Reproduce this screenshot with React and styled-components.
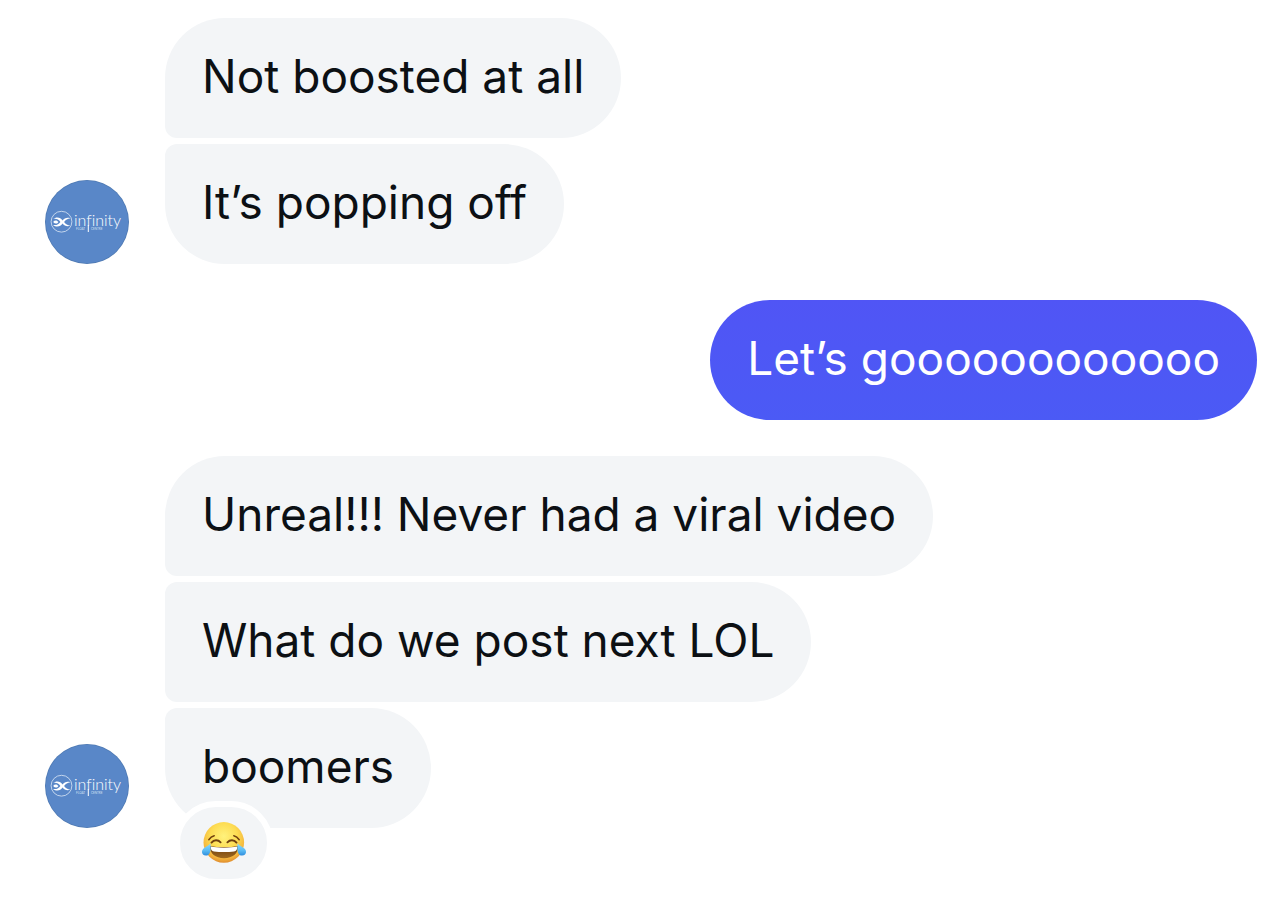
import React from "react";
import styled, { createGlobalStyle } from "styled-components";

const GlobalStyle = createGlobalStyle`
  *, *::before, *::after { box-sizing: border-box; }
  body {
    margin: 0;
    background: #ffffff;
    color: #0c1014;
    font-family: Inter, "Liberation Sans", sans-serif;
  }
`;

const Thread = styled.main`
  display: flex;
  flex-direction: column;
  gap: 36px;
  padding: 18px 19px 80px 45px;
`;

const Group = styled.section`
  display: flex;
  align-items: flex-end;
  justify-content: ${({ $own }) => ($own ? "flex-end" : "flex-start")};
  gap: 36px;
`;

const Stack = styled.div`
  display: flex;
  flex-direction: column;
  align-items: flex-start;
  gap: 6px;
  min-width: 0;
`;

const Bubble = styled.div`
  position: relative;
  padding: 28px 37px 32px;
  font-size: 46px;
  line-height: 60px;
  color: ${({ $own }) => ($own ? "#ffffff" : "#0c1014")};
  background: ${({ $own }) =>
    $own ? "linear-gradient(#5055f5, #4b5af5)" : "#f3f5f7"};
  border-radius: 60px;
  border-top-left-radius: ${({ $joinTop }) => ($joinTop ? "12px" : "60px")};
  border-bottom-left-radius: ${({ $joinBottom }) => ($joinBottom ? "12px" : "60px")};
`;

const Message = styled.p`
  margin: 0;
`;

const Reaction = styled.button`
  position: absolute;
  left: 9px;
  bottom: -57px;
  display: flex;
  align-items: center;
  justify-content: center;
  width: 99px;
  height: 84px;
  padding: 0;
  border: 6px solid #ffffff;
  border-radius: 42px;
  background: #f3f5f7;
`;

const AvatarSvg = styled.svg`
  flex: none;
  width: 84px;
  height: 84px;
`;

const EmojiSvg = styled.svg`
  width: 46px;
  height: 44px;
`;

const LogoWord = styled.text`
  font-family: Lato, sans-serif;
  font-size: 16px;
  font-weight: 300;
  font-variant-ligatures: none;
  fill: #ffffff;
`;

const LogoTagline = styled.text`
  font-family: Lato, sans-serif;
  font-size: 3px;
  fill: #d5e2f3;
`;

function Avatar() {
  return (
    <AvatarSvg viewBox="0 0 84 84" role="img" aria-label="Infinity">
      <circle cx="42" cy="42" r="42" fill="#4f7ab3" />
      <circle cx="42" cy="42" r="41.2" fill="#5987c8" />
      <circle cx="16.5" cy="41.7" r="10.4" fill="none" stroke="#dce7f5" strokeWidth="0.8" />
      <g fill="#ffffff">
        <path d="M8 39C11.500 36.200 15.500 37.300 17.600 40.400C19.400 38 22 37.200 25.400 38.200C22.600 38.600 20.600 39.900 19.100 41.900C20.600 44 22.600 45.300 25.400 45.700C22 46.800 19.400 45.900 17.600 43.500C15.500 46.600 11.500 47.600 8 44.900C11.200 45.500 13.800 44.600 15.400 42C13.800 39.400 11.200 38.400 8 39Z" />
        <path d="M8.600 41.100C10.400 39.900 12.300 40.200 13.400 42C12.300 43.800 10.400 44 8.600 42.800Z" />
      </g>
      <LogoWord x="29" y="46">infinity</LogoWord>
      <path d="M43.300 45V52" stroke="#ffffff" strokeWidth="1" />
      <LogoTagline x="31" y="50">FLOAT</LogoTagline>
      <LogoTagline x="46" y="50">CENTRE</LogoTagline>
    </AvatarSvg>
  );
}

function JoyEmoji() {
  return (
    <EmojiSvg viewBox="0 0 46 44" aria-hidden="true">
      <defs>
        <radialGradient id="joyFace" cx="0.5" cy="0.35" r="0.67">
          <stop offset="0" stopColor="#fff27c" />
          <stop offset="0.5" stopColor="#fddc52" />
          <stop offset="0.82" stopColor="#f4b43c" />
          <stop offset="1" stopColor="#dc862c" />
        </radialGradient>
        <linearGradient id="joyMouth" x1="0" y1="0" x2="0" y2="1">
          <stop offset="0" stopColor="#6a3b10" />
          <stop offset="1" stopColor="#a0691d" />
        </linearGradient>
        <linearGradient id="joyTear" x1="0" y1="0" x2="0" y2="1">
          <stop offset="0" stopColor="#8cdcfc" />
          <stop offset="0.6" stopColor="#58b9f3" />
          <stop offset="1" stopColor="#2f8ddd" />
        </linearGradient>
      </defs>
      <circle cx="22.8" cy="21.400" r="20.3" fill="url(#joyFace)" />
      <g fill="none" stroke="#70400f" strokeLinecap="round">
        <path d="M7.8 18.7C9.2 16.7 10.8 15.4 13.2 14.8" strokeWidth="1.5" />
        <path d="M38.2 18.7C36.8 16.7 35.2 15.4 32.8 14.8" strokeWidth="1.5" />
        <path d="M10.500 21.600C13 18.600 17 18.600 19.600 21.300" strokeWidth="1.9" />
        <path d="M35.500 21.600C33 18.600 29 18.600 26.400 21.300" strokeWidth="1.9" />
      </g>
      <path d="M9 25C17 26.600 29 26.600 37 25C37.500 32.600 31.500 37.200 23 37.200C14.500 37.200 8.500 32.600 9 25Z" fill="url(#joyMouth)" />
      <path d="M9.800 25.600C17 27.100 29 27.100 36.200 25.600C36.400 28.800 35.300 30.200 33 30.500C27 31.300 19 31.300 13 30.500C10.700 30.200 9.600 28.800 9.800 25.600Z" fill="#ffffff" />
      <path d="M9.400 22.400C9.900 26.500 10.300 34.600 4.900 34.600C0.900 34.600 -0.200 30.600 2.300 27.800C4.300 25.600 7.500 24.800 9.400 22.400Z" fill="url(#joyTear)" />
      <path d="M36.600 22.400C36.100 26.500 35.700 34.600 41.100 34.600C45.100 34.600 46.200 30.600 43.700 27.800C41.700 25.600 38.500 24.800 36.600 22.400Z" fill="url(#joyTear)" />
    </EmojiSvg>
  );
}

const groups = [
  { id: 1, own: false, messages: ["Not boosted at all", "It’s popping off"] },
  { id: 2, own: true, messages: ["Let’s goooooooooooo"] },
  {
    id: 3,
    own: false,
    messages: ["Unreal!!! Never had a viral video", "What do we post next LOL", "boomers"],
    reacted: true,
  },
];

export default function App() {
  return (
    <>
      <GlobalStyle />
      <Thread>
        {groups.map(({ id, own, messages, reacted }) => (
          <Group key={id} $own={own}>
            {!own && <Avatar />}
            <Stack>
              {messages.map((text, i) => {
                const last = i === messages.length - 1;
                return (
                  <Bubble key={text} $own={own} $joinTop={i > 0} $joinBottom={!last}>
                    <Message>{text}</Message>
                    {reacted && last && (
                      <Reaction type="button" aria-label="Face with tears of joy reaction">
                        <JoyEmoji />
                      </Reaction>
                    )}
                  </Bubble>
                );
              })}
            </Stack>
          </Group>
        ))}
      </Thread>
    </>
  );
}
